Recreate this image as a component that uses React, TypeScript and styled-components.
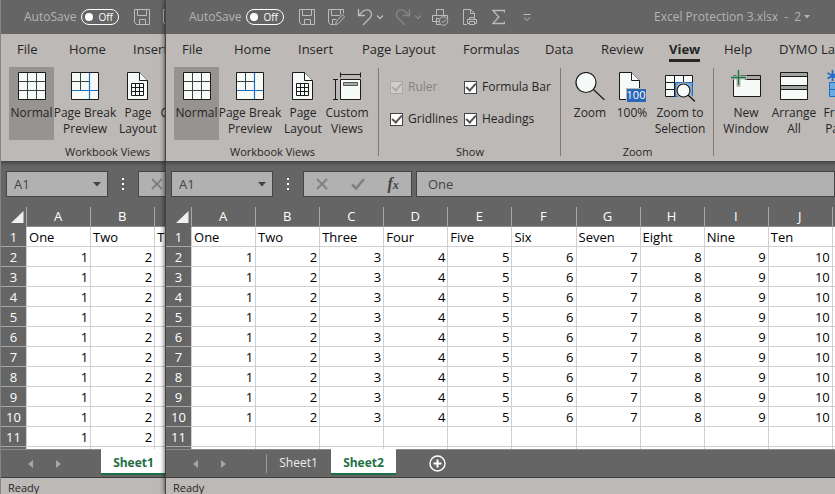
import React from "react";
import styled, { createGlobalStyle, css } from "styled-components";

const uiFont = `"Open Sans", "Noto Sans", sans-serif`;
const dark = "#656565";
const ribbon = "#bdb9b6";
const ink = "#262626";
const paper = "#f6faf9";

const GlobalStyle = createGlobalStyle`
  * { box-sizing: border-box; }
  body { margin: 0; background: ${dark}; }
  button, input { font: inherit; color: inherit; margin: 0; padding: 0; border: 0; background: none; }
  svg { display: block; flex: none; }
`;

const Desktop = styled.div`
  display: flex;
  height: 100vh;
  overflow: hidden;
  font: 12px/16px ${uiFont};
  color: ${ink};
`;

const WindowFrame = styled.section<{ $front?: boolean }>`
  display: flex;
  flex-direction: column;
  min-width: 0;
  overflow: hidden;
  background: ${dark};
  border-left: 1px solid ${(p) => (p.$front ? "#444" : "#858585")};
  ${(p) =>
    p.$front
      ? css`
          flex: 1;
          position: relative;
          box-shadow: 0 0 5px rgba(0, 0, 0, 0.75);
        `
      : css`
          flex: 0 0 165px;
        `}
`;

const TitleBar = styled.header`
  display: flex;
  align-items: center;
  flex: none;
  height: 34px;
  padding-left: 23px;
  color: #b4b4b4;
  white-space: nowrap;
`;

const AutoSaveLabel = styled.label`
  display: flex;
  align-items: center;
  flex: none;
  width: 57px;
`;

const Toggle = styled.button`
  display: flex;
  align-items: center;
  justify-content: space-between;
  flex: none;
  width: 38px;
  height: 16px;
  margin-right: 15px;
  padding: 0 5px 0 3px;
  border: 1px solid #fff;
  border-radius: 8px;
  color: #fff;
  font-size: 10px;
  line-height: 14px;
  &::before {
    content: "";
    width: 8px;
    height: 8px;
    border-radius: 50%;
    background: #fff;
  }
`;

const QuickButton = styled.button<{ $w: number; $dim?: boolean }>`
  display: flex;
  flex: none;
  width: ${(p) => p.$w}px;
  color: ${(p) => (p.$dim ? "#878787" : "#bcbcbc")};
`;

const DocTitle = styled.button`
  display: flex;
  align-items: center;
  gap: 3px;
  flex: none;
  margin-left: 101px;
  white-space: pre;
`;

const TabRow = styled.nav`
  display: flex;
  flex: none;
  height: 33px;
  padding: 6px 0 0 16px;
  background: ${ribbon};
  font-size: 13px;
  line-height: 18px;
`;

const RibbonTab = styled.button<{ $w: number; $active?: boolean }>`
  display: flex;
  flex: none;
  width: ${(p) => p.$w}px;
  white-space: nowrap;
  font-weight: ${(p) => (p.$active ? 700 : 400)};
  span {
    height: 22px;
    border-bottom: 3px solid ${(p) => (p.$active ? ink : "transparent")};
  }
`;

const Ribbon = styled.div`
  display: flex;
  flex: none;
  height: 94px;
  background: ${ribbon};
`;

const Group = styled.div<{ $w: number }>`
  display: flex;
  flex-direction: column;
  flex: 0 0 ${(p) => p.$w}px;
  position: relative;
  &::after {
    content: "";
    position: absolute;
    right: 0;
    top: 1px;
    bottom: 5px;
    width: 1px;
    background: #7d7a78;
  }
`;

const GroupBody = styled.div<{ $pad: number }>`
  display: flex;
  height: 77px;
  padding-left: ${(p) => p.$pad}px;
`;

const GroupLabel = styled.div`
  text-align: center;
  font-size: 11px;
`;

const BigButton = styled.button<{ $w: number; $active?: boolean }>`
  display: flex;
  flex-direction: column;
  align-items: center;
  flex: none;
  width: ${(p) => p.$w}px;
  height: 73px;
  padding-top: 5px;
  white-space: pre;
  line-height: 16px;
  background: ${(p) => (p.$active ? "#969391" : "transparent")};
`;

const IconSlot = styled.span`
  display: block;
  flex: none;
  height: 33px;
`;

const Checks = styled.div`
  display: grid;
  grid-template-columns: 74px 88px;
  grid-auto-rows: 32px;
  padding: 4px 0 0 11px;
`;

const CheckLabel = styled.label<{ $off?: boolean }>`
  display: flex;
  align-items: center;
  gap: 5px;
  white-space: nowrap;
  line-height: 18px;
  color: ${(p) => (p.$off ? "#858280" : ink)};
`;

const CheckBox = styled.input`
  appearance: none;
  flex: none;
  display: grid;
  place-items: center;
  width: 13px;
  height: 13px;
  border: 1px solid #444;
  background: #fff;
  &:checked::after {
    content: "";
    width: 8px;
    height: 4px;
    margin-bottom: 3px;
    border: solid #555;
    border-width: 0 0 2px 2px;
    transform: rotate(-48deg);
  }
  &:disabled {
    border-color: #aaa;
    background: #d0cdcb;
  }
  &:disabled::after {
    border-color: #aaa;
  }
`;

const FormulaRow = styled.div`
  display: flex;
  flex: none;
  height: 45px;
  padding: 10px 0 9px 5px;
  background: linear-gradient(#424644, ${dark} 5px);
  color: #444;
  font-size: 13px;
`;

const FieldBox = styled.div<{ $w?: number }>`
  display: flex;
  align-items: center;
  flex: ${(p) => (p.$w ? `0 0 ${p.$w}px` : "1 0 0")};
  height: 26px;
  border: 1px solid #454545;
  background: #b1b1b1;
`;

const NameInput = styled.input`
  width: 86px;
  padding-left: 7px;
`;

const FormulaInput = styled.input`
  flex: 1;
  min-width: 0;
  padding-left: 11px;
`;

const Dots = styled.div`
  display: flex;
  justify-content: center;
  align-items: center;
  flex: 0 0 30px;
`;

const FormulaActions = styled(FieldBox)`
  margin-right: 4px;
`;

const FormulaButton = styled.button`
  display: flex;
  justify-content: center;
  flex: 1;
`;

const Fx = styled.span`
  font: italic bold 16px/18px "Liberation Serif", serif;
  small {
    font-size: 12px;
  }
`;

const GridArea = styled.div`
  flex: 1 1 0;
  min-height: 0;
  overflow: hidden;
  background: #fff;
`;

const Sheet = styled.table`
  table-layout: fixed;
  width: 730px;
  border-collapse: separate;
  border-spacing: 0;
  font-size: 13px;
  line-height: 17px;
  color: #000;
`;

const Corner = styled.th`
  width: 25px;
  padding: 0;
  background: ${dark};
  svg {
    margin-left: 10px;
  }
`;

const ColHead = styled.th`
  width: 64px;
  height: 21px;
  padding: 0;
  background: linear-gradient(#a8a8a8, #a8a8a8) 0 1px / 1px 100% no-repeat ${dark};
  border-bottom: 1px solid #8e8e8e;
  font-weight: 400;
  color: #fff;
`;

const RowHead = styled.th`
  height: 20px;
  padding: 2px 0 0;
  border-bottom: 1px solid #a8a8a8;
  background: ${dark};
  font-weight: 400;
  color: #fff;
`;

const Cell = styled.td<{ $num?: boolean }>`
  height: 20px;
  padding: 2px 2px 0;
  border-left: 1px solid #d0d0d0;
  border-bottom: 1px solid #d0d0d0;
  text-align: ${(p) => (p.$num ? "right" : "left")};
`;

const SheetBar = styled.div`
  display: flex;
  flex: none;
  height: 29px;
  background: ${dark};
  border-top: 1px solid #8a8a8a;
  border-bottom: 1px solid #3c3c3c;
`;

const SheetNav = styled.div`
  display: flex;
  align-items: center;
  gap: 23px;
  flex: 0 0 100px;
  padding-left: 27px;
  color: #a6a6a6;
`;

const SheetTab = styled.button<{ $active?: boolean }>`
  flex: 0 0 65px;
  height: 25px;
  color: #eee;
  background: linear-gradient(#999, #999) 0 4px / 1px 19px no-repeat;
  ${(p) =>
    p.$active &&
    css`
      margin-top: -1px;
      height: 26px;
      padding-top: 3px;
      background: #fff;
      border-bottom: 2px solid #1d7044;
      color: #1d7044;
      font-weight: 700;
    `}
`;

const AddSheet = styled.button`
  display: flex;
  align-items: center;
  margin-left: 33px;
`;

const Status = styled.footer`
  flex: none;
  height: 16px;
  padding-left: 7px;
  overflow: hidden;
  background: ${ribbon};
  font-size: 11px;
  line-height: 20px;
`;

const Chevron = () => (
  <svg width="8" height="16" viewBox="0 0 8 16" fill="none" stroke="currentColor" strokeWidth="1.3">
    <path d="M1 6.5l3 3 3-3" />
  </svg>
);
const Caret = () => (
  <svg width="8" height="5" viewBox="0 0 8 5">
    <path d="M0 0h8L4 4.5z" fill="currentColor" />
  </svg>
);
const SmallCaret = () => (
  <svg width="6" height="4" viewBox="0 0 6 4">
    <path d="M0 0h6L3 3.500z" fill="currentColor" />
  </svg>
);

const Line = ({ children, w = 17 }: { children: React.ReactNode; w?: number }) => (
  <svg width={w} height="17" viewBox={`0 0 ${w} 17`} fill="none" stroke="currentColor">
    {children}
  </svg>
);

const quick: { name: string; w: number; dim?: boolean; icon: React.ReactNode }[] = [
  {
    name: "Save",
    w: 29,
    icon: <Line><path d="M.5.5h15v15H2.500l-2-2zM3.500.5v6h9v-6M5.500 15.500v-5h6v5" /></Line>,
  },
  {
    name: "Save As",
    w: 29,
    icon: <Line><path d="M15.500 4.500v-4H.5v13l2 2h4M3.500.5v6h8l1-1v-5M4.500 15.500v-5h4M7.500 15.800l1-3.500 6-6.500 2 2-6 6.600z" /></Line>,
  },
  {
    name: "Undo",
    w: 19,
    icon: <Line><path strokeWidth="1.300" d="M1.500 0v6.500H8M1.500 6.500L6 2.200c3-2.400 7-1.500 8.200 1.600.8 2.200 0 4-1.500 5.500L6 16" /></Line>,
  },
  { name: "Undo list", w: 19, icon: <Chevron /> },
  {
    name: "Redo",
    w: 19,
    dim: true,
    icon: <Line><path strokeWidth="1.300" d="M14.500 0v6.500H8M14.500 6.500L10 2.200C7-.2 3 .7 1.800 3.800c-.8 2.200 0 4 1.500 5.500L10 16" /></Line>,
  },
  { name: "Redo list", w: 18, dim: true, icon: <Chevron /> },
  {
    name: "Quick Print",
    w: 31,
    icon: (
      <Line>
        <path d="M4.500 6.500v-6h7v6M7 12.500H.5v-6h15v3M4 9.500h3M4.500 9.500v6h4" />
        <circle cx="11.500" cy="12" r="4.300" />
        <path d="M9.500 12l1.500 1.500 3-3" />
      </Line>
    ),
  },
  {
    name: "Print Preview",
    w: 29,
    icon: <Line><path d="M4 15.500H.5V.5h7l4 4V8M7.500.5v4h4M6.500 10.500v-2h5v2M6 14.500H4.500v-4h9v4H12M6.500 12.500h5v3h-5z" /></Line>,
  },
  {
    name: "AutoSum",
    w: 31,
    icon: <Line w={13}><path strokeWidth="1.300" d="M12.500 3.500V1.500H.8l6 6.500-6 6.500h11.700v-2" /></Line>,
  },
  {
    name: "Customize",
    w: 30,
    icon: <Line w={8}><path d="M.5 5.500h7M1 8.500l3 3 3-3" /></Line>,
  },
];

const GridIcon = () => (
  <svg width="28" height="28" viewBox="0 0 28 28" fill={paper} stroke="#1a1a1a">
    <path d="M.5.5h27v27H.5z" />
    <path d="M9.500 1v26M18.500 1v26M1 9.500h26M1 18.500h26" stroke="#3b443f" />
  </svg>
);
const BreakIcon = () => (
  <svg width="28" height="28" viewBox="0 0 28 28" fill="none" stroke="#3b443f">
    <path d="M.5.5h27v27H.5z" fill={paper} stroke="#1a1a1a" />
    <path d="M9.500 1v17M1 9.500h17" />
    <path d="M18.500 1v26M1 18.500h26" stroke="#1b6ec2" strokeWidth="1.200" />
  </svg>
);
const LayoutIcon = () => (
  <svg width="22" height="28" viewBox="0 0 22 28" fill={paper} stroke="#1a1a1a">
    <path d="M.5.5h12l8 8v19H.5z" />
    <path d="M12.500.5v8h8" />
    <path d="M4.500 11.500h12v12h-12zM8.500 11.500v12M12.500 11.500v12M4.500 15.500h12M4.500 19.500h12" fill="none" />
  </svg>
);
const ViewsIcon = () => (
  <svg width="28" height="28" viewBox="0 0 28 28" fill="none" stroke="#1a1a1a">
    <path d="M7.500.5v5M27.500.5v5M8 2.500h19M0 7.500h5M0 27.500h5M2.500 8v19" />
    <path d="M7.500 7.500h20v20h-20z" fill={paper} />
    <path d="M10.500 10.500h14v3h-14z" fill="#aaa" stroke="#555" />
  </svg>
);
const ZoomIcon = () => (
  <svg width="30" height="28" viewBox="0 0 30 28" fill="none" stroke="#1a1a1a" strokeWidth="1.200">
    <circle cx="11" cy="10.500" r="10" fill={paper} />
    <path d="M18.500 17.500l11 10.500" />
  </svg>
);
const BadgeText = styled.text`
  font: 11px ${uiFont};
`;
const HundredIcon = () => (
  <svg width="27" height="30" viewBox="0 0 27 30" fill={paper} stroke="#1a1a1a">
    <path d="M.5.5h12l8 8v19H.5z" />
    <path d="M12.500.5v8h8" />
    <path d="M7 16h20v14H7z" fill={ribbon} stroke="none" />
    <path d="M8 17h19v13H8z" fill="#2a67b8" stroke="none" />
    <BadgeText x="17" y="27" textAnchor="middle" fill="#fff" stroke="none">100</BadgeText>
  </svg>
);
const SelectionIcon = () => (
  <svg width="30" height="30" viewBox="0 0 30 30" fill="none" stroke="#1a1a1a">
    <path d="M.5 3.500h27v21H.5z" fill={paper} />
    <path d="M10 11h18v14H10z" fill="#6fa5df" stroke="none" />
    <path d="M9.500 4v20M18.500 4v7M1 10.500h9M1 17.500h9" />
    <path d="M10.500 10.500h17v14h-17z" stroke="#1b6ec2" />
    <circle cx="18.500" cy="18.500" r="8" fill={ribbon} stroke="none" />
    <path d="M24 24l6 5" stroke={ribbon} strokeWidth="4" />
    <circle cx="18.500" cy="18.500" r="6.500" fill={paper} strokeWidth="1.200" />
    <path d="M23 23l7 6.500" strokeWidth="1.300" />
  </svg>
);
const NewWindowIcon = () => (
  <svg width="30" height="28" viewBox="0 0 30 28" fill="none" stroke="#1a1a1a" overflow="visible">
    <path d="M2.500 3.500h27v21h-27z" fill={paper} />
    <path d="M14 3.500h15.500v4H14z" fill="#aaa" />
    <path d="M7.500-2v17M0 5.500h16" stroke={ribbon} strokeWidth="4" />
    <path d="M7.500-2v15M0 5.500h15" stroke="#187a44" strokeWidth="1.400" />
  </svg>
);
const ArrangeIcon = () => (
  <svg width="28" height="28" viewBox="0 0 28 28" fill={paper} stroke="#1a1a1a">
    <path d="M.5.5h27v27H.5z" />
    <path d="M.5.5h27v4H.5zM.5 13.500h27v4H.5z" fill="#a3a3a0" />
  </svg>
);
const FreezeIcon = () => (
  <svg width="30" height="28" viewBox="0 0 30 28" fill="none" overflow="visible">
    <path d="M2.500 10.500h27v14h-27z" fill="#69aae0" stroke="#1b6ec2" />
    <path d="M11.500 10v15M20.500 10v15M2 17.500h28" stroke="#1b6ec2" />
    <path d="M5.500-2v11M.5 1l10 5.500M10.500 1l-10 5.500" stroke="#1b6ec2" strokeWidth="1.800" />
  </svg>
);

const tabs: [string, number][] = [
  ["File", 52], ["Home", 64], ["Insert", 64], ["Page Layout", 101], ["Formulas", 82],
  ["Data", 56], ["Review", 68], ["View", 55], ["Help", 55], ["DYMO Label", 90],
];

const columns = "ABCDEFGHIJK".split("");
const names = ["One", "Two", "Three", "Four", "Five", "Six", "Seven", "Eight", "Nine", "Ten", ""];

interface WindowProps {
  id: string;
  front?: boolean;
  filledRows: number;
  sheets: string[];
  active: string;
}

function ExcelWindow({ id, front, filledRows, sheets, active }: WindowProps) {
  return (
    <WindowFrame $front={front}>
      <TitleBar>
        <AutoSaveLabel htmlFor={`${id}-autosave`}>AutoSave</AutoSaveLabel>
        <Toggle id={`${id}-autosave`} role="switch" aria-checked={false}>Off</Toggle>
        {quick.map((q) => (
          <QuickButton key={q.name} aria-label={q.name} $w={q.w} $dim={q.dim}>{q.icon}</QuickButton>
        ))}
        <DocTitle>{"Excel Protection 3.xlsx  -  2"}<SmallCaret /></DocTitle>
      </TitleBar>
      <TabRow>
        {tabs.map(([name, w]) => (
          <RibbonTab key={name} $w={w} $active={name === "View"}><span>{name}</span></RibbonTab>
        ))}
      </TabRow>
      <Ribbon>
        <Group $w={213}>
          <GroupBody $pad={8}>
            <BigButton $w={45} $active><IconSlot><GridIcon /></IconSlot>Normal</BigButton>
            <BigButton $w={62}><IconSlot><BreakIcon /></IconSlot>{"Page Break\nPreview"}</BigButton>
            <BigButton $w={44}><IconSlot><LayoutIcon /></IconSlot>{"Page\nLayout"}</BigButton>
            <BigButton $w={44}><IconSlot><ViewsIcon /></IconSlot>{"Custom\nViews"}</BigButton>
          </GroupBody>
          <GroupLabel>Workbook Views</GroupLabel>
        </Group>
        <Group $w={182}>
          <GroupBody $pad={0}>
            <Checks>
              <CheckLabel $off><CheckBox type="checkbox" defaultChecked disabled />Ruler</CheckLabel>
              <CheckLabel><CheckBox type="checkbox" defaultChecked />Formula Bar</CheckLabel>
              <CheckLabel><CheckBox type="checkbox" defaultChecked />Gridlines</CheckLabel>
              <CheckLabel><CheckBox type="checkbox" defaultChecked />Headings</CheckLabel>
            </Checks>
          </GroupBody>
          <GroupLabel>Show</GroupLabel>
        </Group>
        <Group $w={153}>
          <GroupBody $pad={8}>
            <BigButton $w={42}><IconSlot><ZoomIcon /></IconSlot>Zoom</BigButton>
            <BigButton $w={42}><IconSlot><HundredIcon /></IconSlot>100%</BigButton>
            <BigButton $w={54}><IconSlot><SelectionIcon /></IconSlot>{"Zoom to\nSelection"}</BigButton>
          </GroupBody>
          <GroupLabel>Zoom</GroupLabel>
        </Group>
        <GroupBody $pad={8}>
          <BigButton $w={48}><IconSlot><NewWindowIcon /></IconSlot>{"New\nWindow"}</BigButton>
          <BigButton $w={48}><IconSlot><ArrangeIcon /></IconSlot>{"Arrange\nAll"}</BigButton>
          <BigButton $w={48}><IconSlot><FreezeIcon /></IconSlot>{"Freeze\nPanes"}</BigButton>
        </GroupBody>
      </Ribbon>
      <FormulaRow>
        <FieldBox $w={102}>
          <NameInput aria-label="Name Box" defaultValue="A1" />
          <button aria-label="Open name list"><Caret /></button>
        </FieldBox>
        <Dots>
          <svg width="2" height="12" viewBox="0 0 2 12" fill="#fff">
            <path d="M0 0h2v2H0zM0 5h2v2H0zM0 10h2v2H0z" />
          </svg>
        </Dots>
        <FormulaActions $w={109}>
          <FormulaButton aria-label="Cancel">
            <svg width="12" height="12" viewBox="0 0 12 12" stroke="#808080" strokeWidth="2"><path d="M1 1l10 10M11 1L1 11" /></svg>
          </FormulaButton>
          <FormulaButton aria-label="Enter">
            <svg width="14" height="12" viewBox="0 0 14 12" fill="none" stroke="#808080" strokeWidth="2.600"><path d="M1 6.500l4 4L13 1" /></svg>
          </FormulaButton>
          <FormulaButton aria-label="Insert Function"><Fx>f<small>x</small></Fx></FormulaButton>
        </FormulaActions>
        <FieldBox><FormulaInput aria-label="Formula" defaultValue="One" /></FieldBox>
      </FormulaRow>
      <GridArea>
        <Sheet>
          <thead>
            <tr>
              <Corner>
                <svg width="13" height="12" viewBox="0 0 13 12"><path d="M12.500 0v12H0z" fill="#f0f0f0" /></svg>
              </Corner>
              {columns.map((c) => <ColHead key={c}>{c}</ColHead>)}
            </tr>
          </thead>
          <tbody>
            {Array.from({ length: 12 }, (_, r) => (
              <tr key={r}>
                <RowHead>{r < 11 ? r + 1 : ""}</RowHead>
                {columns.map((c, i) => (
                  <Cell key={c} $num={r > 0}>
                    {r === 0 ? names[i] : r < filledRows && i < 10 ? i + 1 : ""}
                  </Cell>
                ))}
              </tr>
            ))}
          </tbody>
        </Sheet>
      </GridArea>
      <SheetBar>
        <SheetNav>
          <button aria-label="Previous sheet"><svg width="5" height="8" viewBox="0 0 5 8"><path d="M5 0v8L0 4z" fill="currentColor" /></svg></button>
          <button aria-label="Next sheet"><svg width="5" height="8" viewBox="0 0 5 8"><path d="M0 0v8l5-4z" fill="currentColor" /></svg></button>
        </SheetNav>
        {sheets.map((s) => <SheetTab key={s} $active={s === active}>{s}</SheetTab>)}
        <AddSheet aria-label="New sheet">
          <svg width="17" height="17" viewBox="0 0 17 17" fill="none" stroke="#fff">
            <circle cx="8.500" cy="8.500" r="7.500" strokeWidth="1.400" />
            <path d="M8.500 4.500v8M4.500 8.500h8" strokeWidth="2" />
          </svg>
        </AddSheet>
      </SheetBar>
      <Status>Ready</Status>
    </WindowFrame>
  );
}

export default function App() {
  return (
    <>
      <GlobalStyle />
      <Desktop>
        <ExcelWindow id="back" filledRows={11} sheets={["Sheet1"]} active="Sheet1" />
        <ExcelWindow id="front" front filledRows={10} sheets={["Sheet1", "Sheet2"]} active="Sheet2" />
      </Desktop>
    </>
  );
}
